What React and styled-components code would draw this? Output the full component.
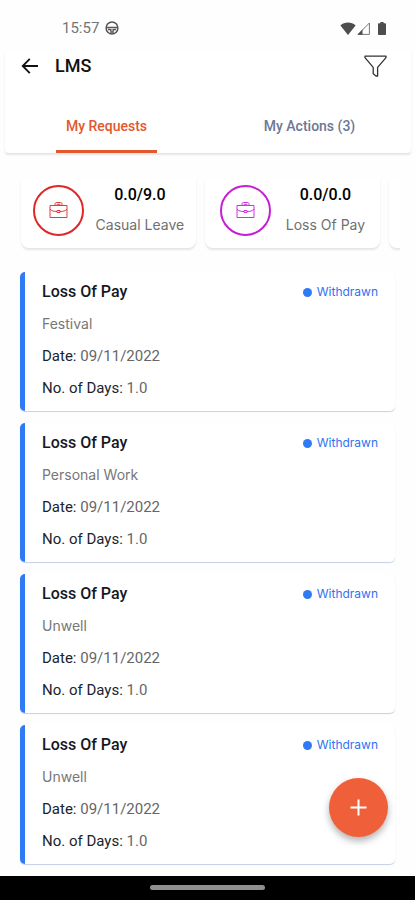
import React, { useState } from "react";

import styled, { createGlobalStyle, css } from "styled-components";

const GlobalStyle = createGlobalStyle`
    * {
        box-sizing: border-box;
    }
    body {
        margin: 0;
        background: #fefefe;
        font-family: Roboto, "Liberation Sans", sans-serif;
        color: #15181f;
    }
    button {
        padding: 0;
        border: none;
        background: none;
        font: inherit;
        color: inherit;
        cursor: pointer;
    }
    h1, h2, p, ul {
        margin: 0;
        padding: 0;
    }
    svg {
        display: block;
    }
`;

const Screen = styled.div`
    display: flex;
    flex-direction: column;
    min-height: 100vh;
`;

const StatusBar = styled.div`
    display: flex;
    align-items: center;
    justify-content: space-between;
    height: 50px;
    padding: 6px 29px 0 62px;
    font-size: 15px;
    color: #757575;
`;

const StatusGroup = styled.div`
    display: flex;
    align-items: center;
    gap: ${props => props.$gap}px;
`;

const Header = styled.header`
    margin: 0 4px 0 5px;
    background: #fff;
    border-radius: 0 0 4px 4px;
    box-shadow: 0 2px 2px rgba(0, 0, 0, 0.1);
`;

const TitleRow = styled.div`
    display: flex;
    align-items: center;
    height: 32px;
    padding: 0 24px 0 16px;
`;

const Title = styled.h1`
    flex: 1;
    margin-left: 16px;
    font-size: 18px;
    line-height: 24px;
    font-weight: 500;
    color: #111;
`;

const Tabs = styled.div`
    display: flex;
    margin-top: 18px;
`;

const Tab = styled.button`
    flex: 1;
    display: flex;
    flex-direction: column;
    align-items: center;
    justify-content: space-between;
    height: 53px;
    padding-top: 16px;
    font-size: 14px;
    line-height: 20px;
    color: #6d7796;
    font-weight: 500;
    &::after {
        content: "";
        width: 50%;
        height: 3px;
    }
    ${props => props.$active && css`
        color: #e2582f;
        &::after {
            background: #e2582f;
        }
    `}
`;

const Balances = styled.div`
    display: flex;
    gap: 9px;
    margin: 25px 15px 0 18px;
    padding: 0 3px 6px;
    overflow: hidden;
`;

const BalanceCard = styled.div`
    flex: 0 0 175px;
    display: flex;
    align-items: center;
    justify-content: space-evenly;
    height: 70px;
    padding-bottom: 6px;
    background: #fff;
    border-radius: 0 0 8px 8px;
    box-shadow: 0 2px 2px rgba(0, 0, 0, 0.1);
`;

const Ring = styled.div`
    display: flex;
    align-items: center;
    justify-content: center;
    width: 51px;
    height: 51px;
    border: 2px solid;
    border-radius: 50%;
    color: ${props => props.$color};
`;

const BalanceText = styled.div`
    text-align: center;
`;

const BalanceValue = styled.p`
    font-size: 16px;
    line-height: 20px;
    font-weight: 500;
    color: #000;
`;

const BalanceName = styled.p`
    margin-top: 10px;
    font-family: Inter, Roboto, sans-serif;
    font-size: 14px;
    line-height: 20px;
    color: #707070;
`;

const RequestList = styled.ul`
    flex: 1;
    display: flex;
    flex-direction: column;
    gap: 12px;
    margin: 18px 20px 12px;
    list-style: none;
`;

const RequestCard = styled.li`
    display: flex;
    flex-direction: column;
    gap: 12px;
    padding: 10px 17px 13px;
    background: #fff;
    border-left: 5px solid #2f7bf6;
    border-radius: 5px;
    box-shadow: 0 1px 1px rgba(60, 100, 180, 0.3);
    font-size: 15px;
    line-height: 20px;
`;

const RequestHead = styled.div`
    display: flex;
    align-items: center;
    justify-content: space-between;
`;

const RequestTitle = styled.h2`
    font-size: 16px;
    line-height: 20px;
    font-weight: 500;
`;

const Status = styled.span`
    display: flex;
    align-items: center;
    gap: 5px;
    font-family: Inter, Roboto, sans-serif;
    font-size: 12px;
    color: #2f72f2;
    &::before {
        content: "";
        width: 9px;
        height: 9px;
        border-radius: 50%;
        background: #2f7bf6;
    }
`;

const Reason = styled.p`
    font-family: Inter, Roboto, sans-serif;
    font-size: 14px;
    color: #777;
`;

const Detail = styled.p`
    color: #666;
`;

const DetailLabel = styled.span`
    color: #20232c;
`;

const AddButton = styled.button`
    position: fixed;
    right: 27px;
    bottom: 63px;
    display: flex;
    align-items: center;
    justify-content: center;
    width: 59px;
    height: 59px;
    border-radius: 50%;
    && {
        background: #ef603a;
    }
    box-shadow: 0 4px 7px rgba(0, 0, 0, 0.3);
`;

const NavBar = styled.div`
    position: sticky;
    bottom: 0;
    display: flex;
    justify-content: center;
    height: 24px;
    padding-top: 9px;
    background: #000;
`;

const NavHandle = styled.div`
    width: 115px;
    height: 5px;
    border-radius: 3px;
    background: #8f8f8f;
`;

const WheelIcon = () => (
    <svg width="14" height="14" viewBox="0 0 14 14" fill="none" stroke="#555" strokeWidth="1.5">
        <circle cx="7" cy="7" r="5.9" />
        <path d="M1.3 6.6H12.7M3 8.4L5.8 8.6L6.2 12.6M11 8.4L8.2 8.6L7.8 12.6" />
    </svg>
);

const WifiIcon = () => (
    <svg width="16" height="13" viewBox="0 0 16 13" fill="#4d4d4d">
        <path d="M8 13L0.4 3.4C4.6-0.4 11.4-0.4 15.6 3.4Z" />
    </svg>
);

const SignalIcon = () => (
    <svg width="13" height="13" viewBox="0 0 13 13">
        <path d="M1 12.4H12.4V1Z" fill="none" stroke="#777" />
        <path d="M0.5 12.7L5.5 7.5V12.7Z" fill="#4d4d4d" />
    </svg>
);

const BatteryIcon = () => (
    <svg width="8" height="13" viewBox="0 0 8 13" fill="#4d4d4d">
        <path d="M2.4 0H5.6V1.2H7C7.6 1.2 8 1.6 8 2.2V12C8 12.6 7.6 13 7 13H1C0.4 13 0 12.6 0 12V2.2C0 1.6 0.4 1.2 1 1.2H2.4Z" />
    </svg>
);

const BackIcon = () => (
    <svg width="18" height="18" viewBox="0 0 18 18" fill="none" stroke="#111" strokeWidth="1.8">
        <path d="M17 9H2M8.8 1.8L1.7 9L8.8 16.2" />
    </svg>
);

const FilterIcon = () => (
    <svg width="23" height="22" viewBox="0 0 23 22" fill="none" stroke="#333" strokeWidth="1.3" strokeLinejoin="round">
        <path d="M1 1.2H22V2.6L13.6 12.4V21H12L9.2 18.8V12.4L1 2.6Z" />
    </svg>
);

const BriefcaseIcon = () => (
    <svg width="19" height="18" viewBox="0 0 19 18" fill="none" stroke="currentColor" strokeWidth="0.9">
        <path d="M1 4.5H18V16.5H1ZM6 4.5V3.2C6 2 6.6 1.5 7.6 1.5H11.4C12.4 1.5 13 2 13 3.2V4.5" />
        <path d="M1 8.2C2.5 10 5 10.5 8 10.5M18 8.2C16.5 10 14 10.5 11 10.5M8 9.5H11V11.5H8ZM7.6 3.3H11.4" />
    </svg>
);

const PlusIcon = () => (
    <svg width="17" height="17" viewBox="0 0 17 17" stroke="#fff" strokeWidth="2">
        <path d="M8.5 0.5V16.5M0.5 8.5H16.5" />
    </svg>
);

const balances = [
    { name: "Casual Leave", value: "0.0/9.0", color: "#e02626" },
    { name: "Loss Of Pay", value: "0.0/0.0", color: "#c41ed6" },
    { name: "", value: "", color: "transparent" },
];

const requests = [
    { id: 1, reason: "Festival" },
    { id: 2, reason: "Personal Work" },
    { id: 3, reason: "Unwell" },
    { id: 4, reason: "Unwell" },
];

const tabs = ["My Requests", "My Actions (3)"];

const Request = ({ reason }) => (
    <RequestCard>
        <RequestHead>
            <RequestTitle>Loss Of Pay</RequestTitle>
            <Status>Withdrawn</Status>
        </RequestHead>
        <Reason>{reason}</Reason>
        <Detail><DetailLabel>Date:</DetailLabel> 09/11/2022</Detail>
        <Detail><DetailLabel>No. of Days:</DetailLabel> 1.0</Detail>
    </RequestCard>
);

const App = () => {
    const [active, setActive] = useState(0);

    return (
        <Screen>
            <GlobalStyle />
            <StatusBar>
                <StatusGroup $gap={6}>
                    15:57
                    <WheelIcon />
                </StatusGroup>
                <StatusGroup $gap={8}>
                    <StatusGroup $gap={1}>
                        <WifiIcon />
                        <SignalIcon />
                    </StatusGroup>
                    <BatteryIcon />
                </StatusGroup>
            </StatusBar>
            <Header>
                <TitleRow>
                    <button aria-label="Back"><BackIcon /></button>
                    <Title>LMS</Title>
                    <button aria-label="Filter"><FilterIcon /></button>
                </TitleRow>
                <Tabs role="tablist">
                    {tabs.map((tab, index) => (
                        <Tab
                            key={tab}
                            role="tab"
                            aria-selected={active === index}
                            $active={active === index}
                            onClick={() => setActive(index)}
                        >
                            {tab}
                        </Tab>
                    ))}
                </Tabs>
            </Header>
            <Balances>
                {balances.map(({ name, value, color }) => (
                    <BalanceCard key={name}>
                        {name && (
                            <>
                                <Ring $color={color}><BriefcaseIcon /></Ring>
                                <BalanceText>
                                    <BalanceValue>{value}</BalanceValue>
                                    <BalanceName>{name}</BalanceName>
                                </BalanceText>
                            </>
                        )}
                    </BalanceCard>
                ))}
            </Balances>
            <RequestList>
                {requests.map(request => <Request key={request.id} {...request} />)}
            </RequestList>
            <AddButton aria-label="New request"><PlusIcon /></AddButton>
            <NavBar><NavHandle /></NavBar>
        </Screen>
    );
};

export default App;
